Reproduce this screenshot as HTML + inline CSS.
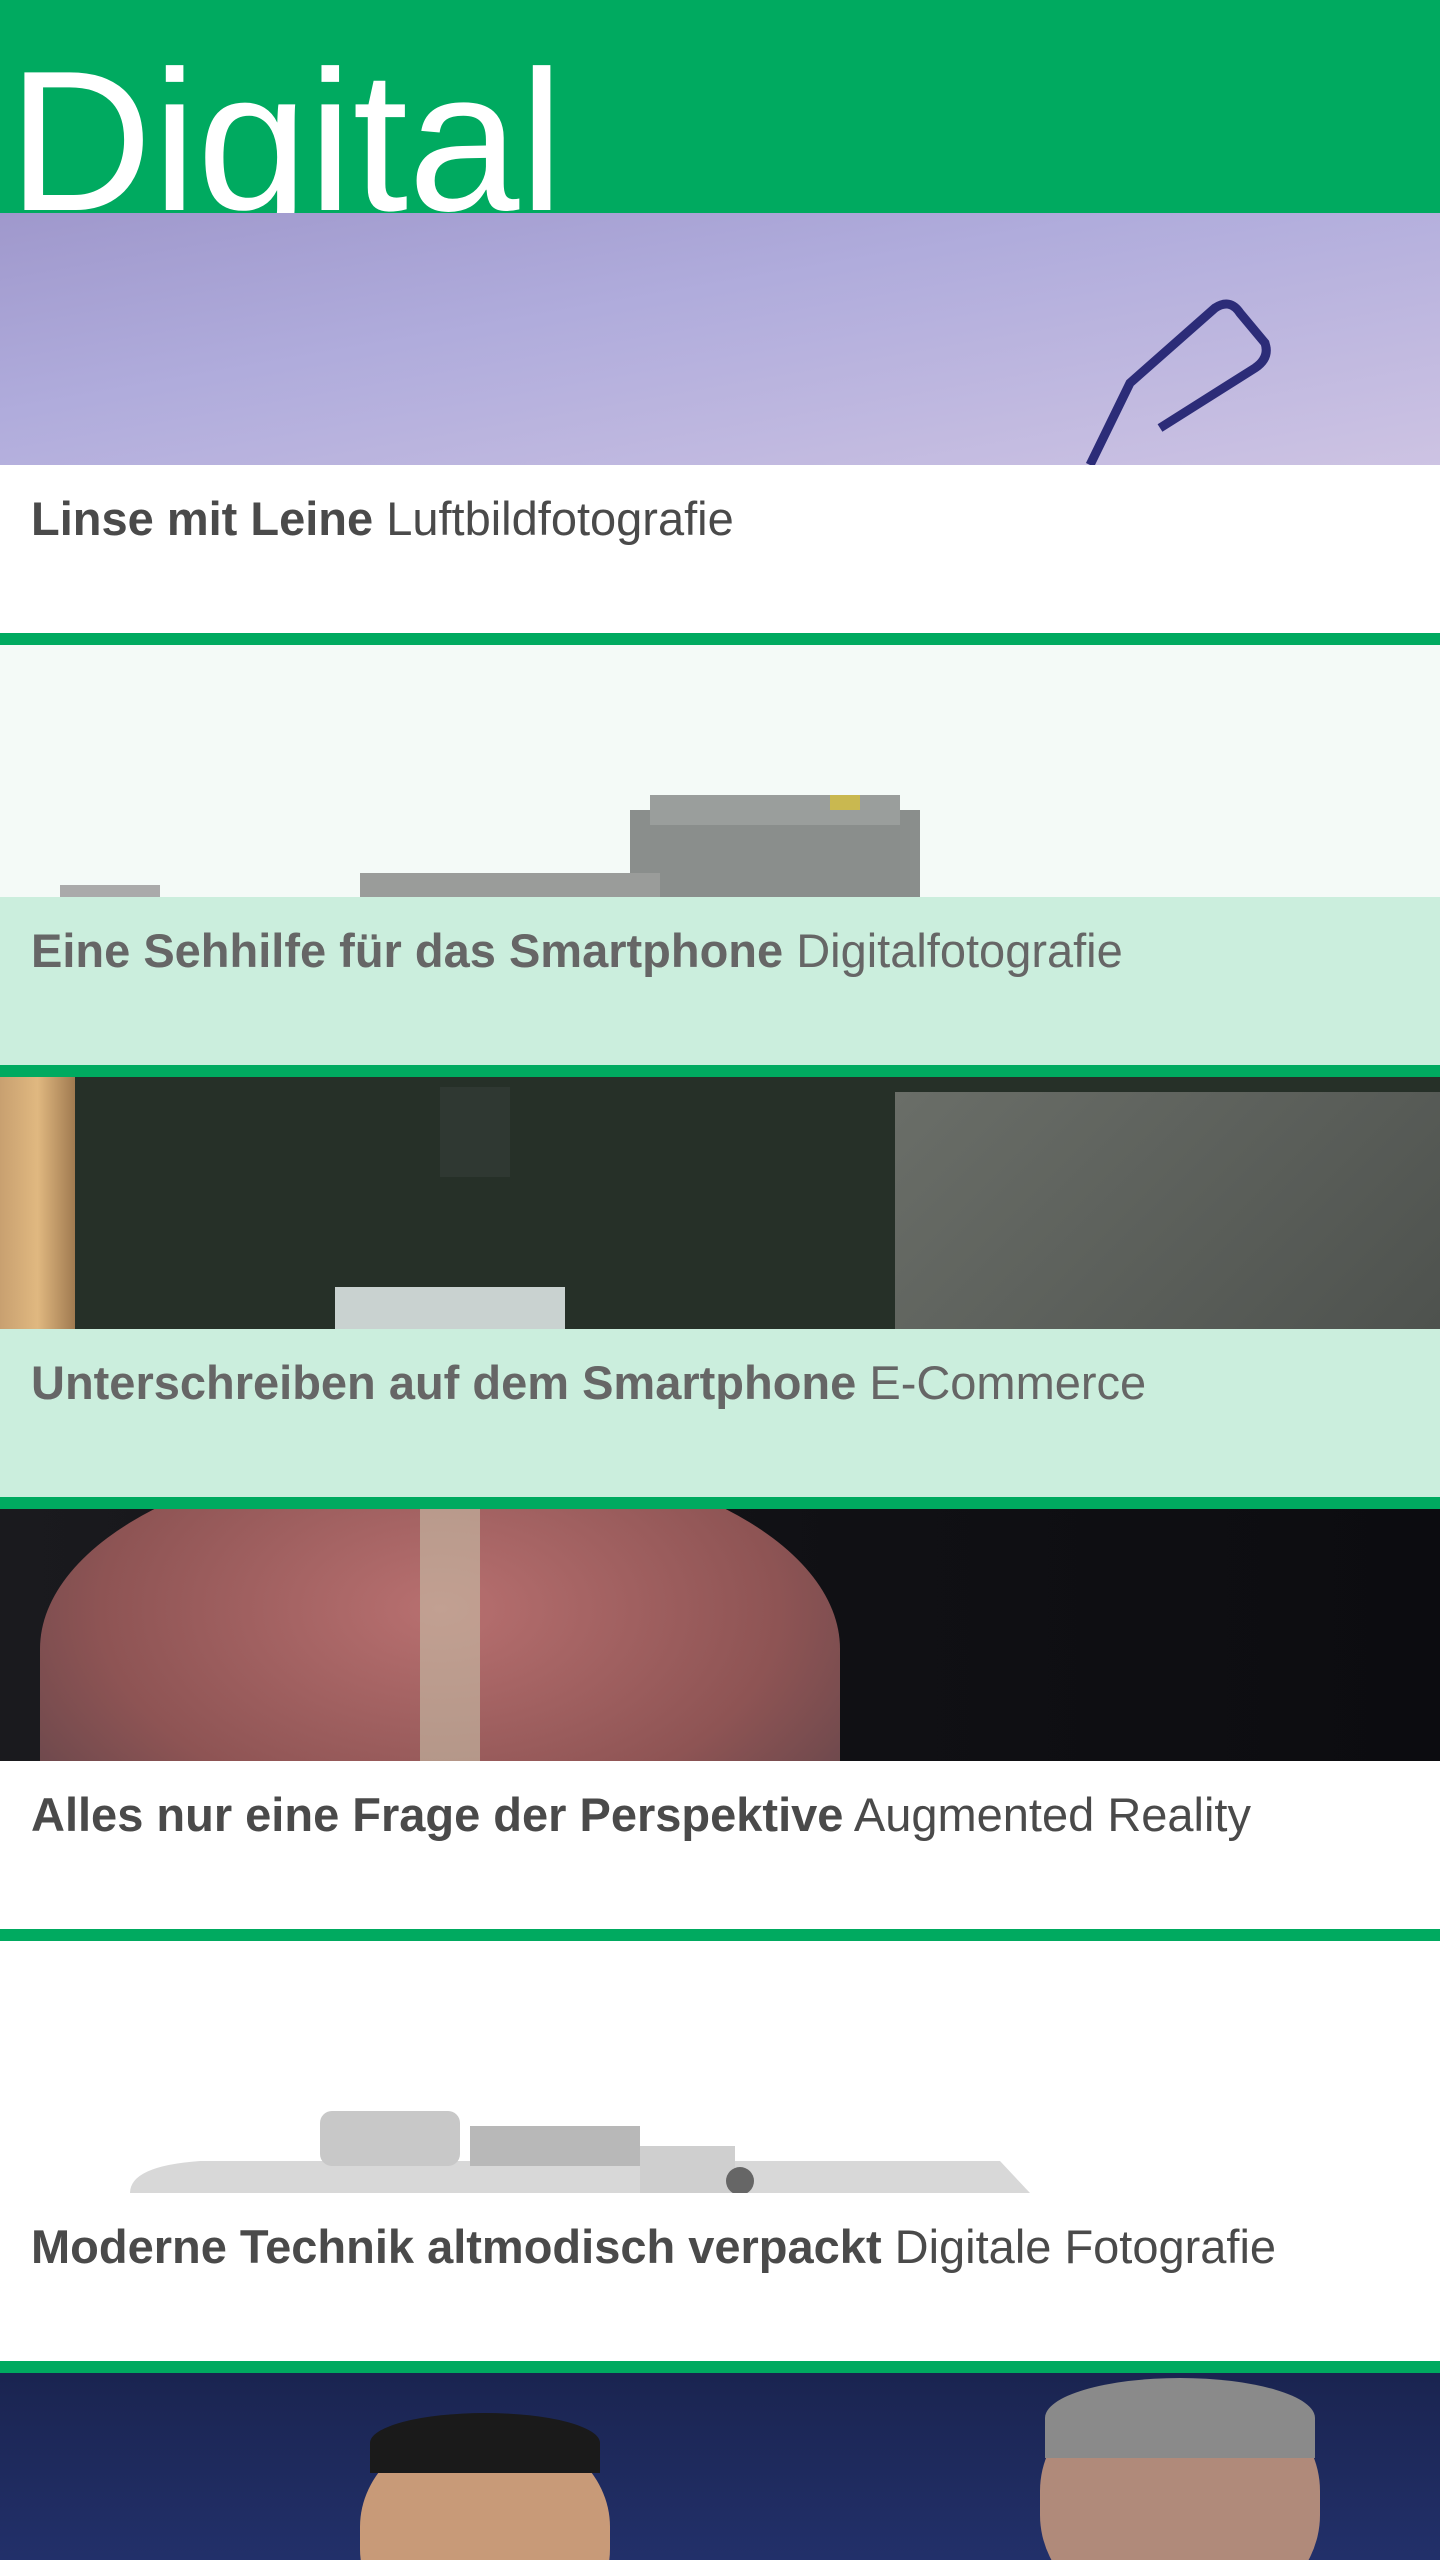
<!DOCTYPE html>
<html><head><meta charset="utf-8"><style>
*{margin:0;padding:0;box-sizing:border-box}
body{width:1440px;height:2560px;overflow:hidden;background:#fff;font-family:"Liberation Sans",sans-serif}
.hdr{height:213px;background:#00aa60;overflow:hidden;position:relative}
.hdr span{position:absolute;left:8px;top:42px;font-size:200px;line-height:1;color:#fff;font-weight:300;letter-spacing:0}
.img{height:252px;position:relative;overflow:hidden}
.txt{height:168px;padding:0 0 0 31px;font-size:47px;line-height:1}
.txt div{padding-top:30px;color:#4a4a4a;letter-spacing:0}
.txt b{font-weight:700}
.g .txt{background:#cbeedd}
.g .txt div{color:#666}
.line{height:12px;background:#00aa60}
</style></head><body>
<div class="hdr"><span>Digital</span></div>

<div class="img" style="background:linear-gradient(170deg,#9f98cc 0%,#b0acdc 40%,#cdc3e3 100%)">
<svg width="1440" height="252" style="position:absolute;left:0;top:0"><path d="M1090 252 L1130 170 L1215 95 Q1230 85 1240 100 L1265 130 Q1270 145 1255 155 L1160 215" stroke="#2c2c78" stroke-width="9" fill="none"/></svg>
</div>
<div class="txt"><div><b>Linse mit Leine</b> Luftbildfotografie</div></div>
<div class="line"></div>

<div class="g">
<div class="img" style="background:#f4faf7">
<svg width="1440" height="252" style="position:absolute;left:0;top:0">
<rect x="630" y="165" width="290" height="87" fill="#8a8e8c"/>
<rect x="650" y="150" width="250" height="30" fill="#9a9e9c"/>
<rect x="360" y="228" width="300" height="24" fill="#9a9c9a"/>
<rect x="60" y="240" width="100" height="12" fill="#aaa"/>
<rect x="830" y="150" width="30" height="15" fill="#c9b850"/>
</svg>
</div>
<div class="txt"><div><b>Eine Sehhilfe für das Smartphone</b> Digitalfotografie</div></div>
</div>
<div class="line"></div>

<div class="g">
<div class="img" style="background:#263028">
<div style="position:absolute;left:0;top:0;width:75px;height:252px;background:linear-gradient(90deg,#c8a070,#e0b880,#a07a50)"></div>
<div style="position:absolute;left:335px;top:210px;width:230px;height:42px;background:#c9d2d0"></div>
<div style="position:absolute;left:895px;top:15px;width:545px;height:237px;background:linear-gradient(135deg,#6a6e68,#4e524e)"></div>
<div style="position:absolute;left:440px;top:10px;width:70px;height:90px;background:#2f3832"></div>
</div>
<div class="txt"><div><b>Unterschreiben auf dem Smartphone</b> E-Commerce</div></div>
</div>
<div class="line"></div>

<div class="img" style="background:linear-gradient(90deg,#1a1a1e,#101014 60%,#0c0c10)">
<div style="position:absolute;left:40px;top:-60px;width:800px;height:400px;border-radius:50% 50% 0 0;background:radial-gradient(ellipse at 50% 40%,#b87070,#8e5454 60%,#5a4248)"></div>
<div style="position:absolute;left:420px;top:0;width:60px;height:252px;background:#c8c0a8;opacity:.6"></div>
</div>
<div class="txt"><div><b>Alles nur eine Frage der Perspektive</b> Augmented Reality</div></div>
<div class="line"></div>

<div class="img" style="background:#fff">
<svg width="1440" height="252" style="position:absolute;left:0;top:0">
<path d="M130 252 Q130 225 200 220 L1000 220 L1030 252Z" fill="#d8d8d8"/>
<rect x="320" y="170" width="140" height="55" rx="12" fill="#c8c8c8"/>
<rect x="470" y="185" width="170" height="40" fill="#b8b8b8"/>
<rect x="640" y="205" width="95" height="47" fill="#cfcfcf"/>
<circle cx="740" cy="240" r="14" fill="#666"/>
</svg>
</div>
<div class="txt"><div><b>Moderne Technik altmodisch verpackt</b> Digitale Fotografie</div></div>
<div class="line"></div>

<div class="img" style="height:187px;background:linear-gradient(180deg,#1a2450,#22306a)">
<div style="position:absolute;left:360px;top:55px;width:250px;height:220px;border-radius:45%;background:#c89a78"></div>
<div style="position:absolute;left:370px;top:40px;width:230px;height:60px;border-radius:50% 50% 0 0;background:#1a1a1a"></div>
<div style="position:absolute;left:1040px;top:10px;width:280px;height:240px;border-radius:45%;background:#b08a7a"></div>
<div style="position:absolute;left:1045px;top:5px;width:270px;height:80px;border-radius:50% 50% 0 0;background:#8a8a8a"></div>
</div>
</body></html>
